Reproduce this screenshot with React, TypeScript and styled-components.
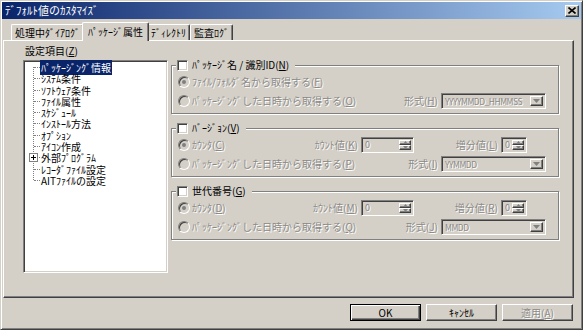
import styled, { createGlobalStyle, css } from 'styled-components';

const FACE = '#d4d0c8';
const SHADOW = '#808080';
const DARK = '#404040';
const LIGHT = '#ffffff';
const GRAY_TEXT = '#8c8a86';

const GlobalStyle = createGlobalStyle`
  html, body {
    margin: 0;
    padding: 0;
    background: #fff;
  }
  body {
    font-family: "MS UI Gothic", "Noto Sans CJK JP", sans-serif;
    font-size: 10px;
    line-height: 12px;
    color: #000;
  }
  * {
    box-sizing: border-box;
  }
`;

const raised = css`
  border: 1px solid;
  border-color: ${LIGHT} ${DARK} ${DARK} ${LIGHT};
  box-shadow: inset -1px -1px ${SHADOW};
`;

const sunken = css`
  border: 1px solid;
  border-color: ${SHADOW} ${LIGHT} ${LIGHT} ${SHADOW};
  box-shadow: inset 1px 1px ${DARK}, inset -1px -1px ${FACE};
`;

const disabledText = css`
  color: ${GRAY_TEXT};
  text-shadow: 1px 1px ${LIGHT};
`;

const Window = styled.div`
  width: 583px;
  height: 330px;
  background: ${FACE};
  border: 1px solid;
  border-color: ${FACE} ${DARK} ${DARK} ${FACE};
  box-shadow: inset 1px 1px ${LIGHT}, inset -1px -1px ${SHADOW};
  padding: 1px;
  display: flex;
  flex-direction: column;
`;

const TitleBar = styled.div`
  height: 17px;
  background: linear-gradient(to right, #0a246a, #a6caf0);
  color: #fff;
  display: flex;
  align-items: center;
  justify-content: space-between;
  padding: 0 2px 0 3px;
`;

const TitleText = styled.span`
  font-size: 11px;
  line-height: 13px;
`;

const CloseButton = styled.div`
  width: 14px;
  height: 12px;
  background: ${FACE};
  ${raised};
  display: flex;
  align-items: center;
  justify-content: center;
`;

const TabStrip = styled.div`
  height: 21px;
  display: flex;
  align-items: flex-end;
  padding-left: 9px;
  position: relative;
  z-index: 1;
`;

const Tab = styled.div<{ $active?: boolean }>`
  height: ${(p) => (p.$active ? 19 : 16)}px;
  padding: 0 ${(p) => (p.$active ? 5 : 3)}px;
  margin: 0 ${(p) => (p.$active ? -2 : 0)}px ${(p) => (p.$active ? -1 : 0)}px;
  background: ${FACE};
  border-top: 1px solid ${LIGHT};
  border-left: 1px solid ${LIGHT};
  border-right: 1px solid ${DARK};
  box-shadow: inset -1px 0 ${SHADOW};
  border-radius: 2px 2px 0 0;
  display: flex;
  align-items: center;
  position: relative;
  z-index: ${(p) => (p.$active ? 2 : 0)};
  white-space: nowrap;
`;

const Panel = styled.div`
  height: 258px;
  margin: 0 7px 0 1px;
  ${raised};
  display: flex;
  padding: 4px 0 0 19px;
`;

const LeftColumn = styled.div`
  width: 145px;
  display: flex;
  flex-direction: column;
`;

const FieldCaption = styled.div`
  height: 15px;
  padding-left: 2px;
`;

const Tree = styled.div`
  height: 213px;
  background: #fff;
  ${sunken};
  padding: 1px 0 0 2px;
`;

const TreeList = styled.div`
  position: relative;

  &::before {
    content: '';
    position: absolute;
    left: 7px;
    top: 5px;
    height: 113px;
    border-left: 1px dotted ${SHADOW};
  }
`;

const TreeItem = styled.div`
  position: relative;
  height: 11.3px;
  line-height: 11.3px;
  padding-left: 14px;
  white-space: nowrap;

  &::before {
    content: '';
    position: absolute;
    left: 8px;
    top: 5px;
    width: 6px;
    border-top: 1px dotted ${SHADOW};
  }
`;

const TreeText = styled.span<{ $selected?: boolean }>`
  padding: 0 1px;
  ${(p) =>
    p.$selected &&
    css`
      background: #0a246a;
      color: #fff;
    `}
`;

const Expander = styled.span`
  position: absolute;
  left: 3px;
  top: 1px;
  width: 9px;
  height: 9px;
  border: 1px solid ${SHADOW};
  background: #fff;
  z-index: 1;

  &::before,
  &::after {
    content: '';
    position: absolute;
    background: #000;
  }
  &::before {
    left: 1px;
    top: 3px;
    width: 5px;
    height: 1px;
  }
  &::after {
    left: 3px;
    top: 1px;
    width: 1px;
    height: 5px;
  }
`;

const RightColumn = styled.div`
  width: 388px;
  margin-left: 3px;
  padding-top: 14px;
  display: flex;
  flex-direction: column;
  gap: 8px;
`;

const Group = styled.fieldset`
  margin: 0;
  min-width: 0;
  padding: 1px 12px 3px 6px;
  border: 1px solid ${SHADOW};
  box-shadow: inset 1px 1px ${LIGHT}, 1px 1px ${LIGHT};
`;

const Legend = styled.legend`
  display: flex;
  align-items: center;
  gap: 4px;
  height: 12px;
  margin-left: -2px;
  padding: 0 6px 0 1px;
  background: ${FACE};
  position: relative;
`;

const CheckBox = styled.span`
  width: 11px;
  height: 11px;
  background: #fff;
  ${sunken};
`;

const Row = styled.div<{ $endGap?: number }>`
  height: 19px;
  display: flex;
  align-items: center;
  padding-right: ${(p) => p.$endGap ?? 0}px;
`;

const Radio = styled.label`
  flex: 1;
  display: flex;
  align-items: center;
  gap: 2px;
  white-space: nowrap;
  ${disabledText};
`;

const RadioCircle = styled.span<{ $checked?: boolean }>`
  width: 12px;
  height: 12px;
  border-radius: 50%;
  border: 1px solid;
  border-color: ${SHADOW} ${LIGHT} ${LIGHT} ${SHADOW};
  box-shadow: inset 1px 1px ${DARK};
  background: ${FACE};
  position: relative;
  flex: none;

  ${(p) =>
    p.$checked &&
    css`
      &::after {
        content: '';
        position: absolute;
        left: 3px;
        top: 3px;
        width: 4px;
        height: 4px;
        border-radius: 50%;
        background: ${SHADOW};
      }
    `}
`;

const FieldLabel = styled.span<{ $width: number }>`
  width: ${(p) => p.$width}px;
  text-align: right;
  margin-right: 3px;
  white-space: nowrap;
  ${disabledText};
`;

const SpinBox = styled.div<{ $width: number }>`
  width: ${(p) => p.$width}px;
  height: 16px;
  ${sunken};
  background: ${FACE};
  display: flex;
  padding: 2px;
`;

const SpinValue = styled.span`
  flex: 1;
  font-size: 9px;
  line-height: 10px;
  padding-left: 1px;
  ${disabledText};
`;

const SpinButtons = styled.div`
  width: 12px;
  display: flex;
  flex-direction: column;
`;

const SpinButton = styled.div`
  flex: 1;
  background: ${FACE};
  ${raised};
  display: flex;
  align-items: center;
  justify-content: center;
`;

const Combo = styled.div`
  width: 105px;
  height: 16px;
  ${sunken};
  background: ${FACE};
  display: flex;
  padding: 2px;
`;

const ComboText = styled.span`
  flex: 1;
  font-size: 8.5px;
  letter-spacing: -0.5px;
  line-height: 11px;
  padding-left: 1px;
  white-space: nowrap;
  overflow: hidden;
  ${disabledText};
`;

const DropButton = styled.div`
  width: 13px;
  flex: none;
  background: ${FACE};
  ${raised};
  display: flex;
  align-items: center;
  justify-content: center;
`;

const ButtonRow = styled.div`
  display: flex;
  justify-content: flex-end;
  gap: 5px;
  margin-top: 6px;
  padding-right: 8px;
`;

const PushButton = styled.div<{ $default?: boolean; $disabled?: boolean }>`
  width: 71px;
  height: 17px;
  background: ${FACE};
  ${raised};
  display: flex;
  align-items: center;
  justify-content: center;
  ${(p) =>
    p.$default &&
    css`
      border: 1px solid #000;
      box-shadow: inset 1px 1px ${LIGHT}, inset -1px -1px ${DARK}, inset -2px -2px ${SHADOW};
    `}
  ${(p) => p.$disabled && disabledText};
`;

const Arrow = ({ up = false }: { up?: boolean }) => (
  <svg width="5" height="3" viewBox="0 0 5 3">
    <path d={up ? 'M2.5 0 L5 3 L0 3 Z' : 'M0 0 L5 0 L2.5 3 Z'} fill={SHADOW} />
  </svg>
);

const Spin = ({ width }: { width: number }) => (
  <SpinBox $width={width}>
    <SpinValue>0</SpinValue>
    <SpinButtons>
      <SpinButton>
        <Arrow up />
      </SpinButton>
      <SpinButton>
        <Arrow />
      </SpinButton>
    </SpinButtons>
  </SpinBox>
);

const Select = ({ value }: { value: string }) => (
  <Combo>
    <ComboText>{value}</ComboText>
    <DropButton>
      <svg width="7" height="4" viewBox="0 0 7 4">
        <path d="M0 0 L7 0 L3.5 4 Z" fill={SHADOW} />
      </svg>
    </DropButton>
  </Combo>
);

const treeItems = [
  'ﾊﾟｯｹｰｼﾞﾝｸﾞ情報',
  'ｼｽﾃﾑ条件',
  'ｿﾌﾄｳｪｱ条件',
  'ﾌｧｲﾙ属性',
  'ｽｹｼﾞｭｰﾙ',
  'ｲﾝｽﾄｰﾙ方法',
  'ｵﾌﾟｼｮﾝ',
  'ｱｲｺﾝ作成',
  '外部ﾌﾟﾛｸﾞﾗﾑ',
  'ﾚｺｰﾀﾞﾌｧｲﾙ設定',
  'AITﾌｧｲﾙの設定',
];

const DATE_RADIO = 'ﾊﾟｯｹｰｼﾞﾝｸﾞした日時から取得する';

const CounterRow = ({ radioKey, countKey, stepKey }: { radioKey: string; countKey: string; stepKey: string }) => (
  <Row $endGap={19}>
    <Radio>
      <RadioCircle $checked />
      <span>
        ｶｳﾝﾀ(<u>{radioKey}</u>)
      </span>
    </Radio>
    <FieldLabel $width={52}>
      ｶｳﾝﾄ値(<u>{countKey}</u>)
    </FieldLabel>
    <Spin width={53} />
    <FieldLabel $width={84}>
      増分値(<u>{stepKey}</u>)
    </FieldLabel>
    <Spin width={26} />
  </Row>
);

const DateRow = ({ radioKey, formatKey, format }: { radioKey: string; formatKey: string; format: string }) => (
  <Row>
    <Radio>
      <RadioCircle />
      <span>
        {DATE_RADIO}(<u>{radioKey}</u>)
      </span>
    </Radio>
    <FieldLabel $width={40}>
      形式(<u>{formatKey}</u>)
    </FieldLabel>
    <Select value={format} />
  </Row>
);

const App = () => {
  return (
    <>
      <GlobalStyle />
      <Window>
        <TitleBar>
          <TitleText>ﾃﾞﾌｫﾙﾄ値のｶｽﾀﾏｲｽﾞ</TitleText>
          <CloseButton>
            <svg width="8" height="7" viewBox="0 0 8 7">
              <path d="M0.5 0.5 L7.5 6.5 M7.5 0.5 L0.5 6.5" stroke="#000" strokeWidth="1.6" />
            </svg>
          </CloseButton>
        </TitleBar>

        <TabStrip>
          <Tab>処理中ﾀﾞｲｱﾛｸﾞ</Tab>
          <Tab $active>ﾊﾟｯｹｰｼﾞ属性</Tab>
          <Tab>ﾃﾞｨﾚｸﾄﾘ</Tab>
          <Tab>監査ﾛｸﾞ</Tab>
        </TabStrip>

        <Panel>
          <LeftColumn>
            <FieldCaption>
              設定項目(<u>Z</u>)
            </FieldCaption>
            <Tree>
              <TreeList>
                {treeItems.map((item, i) => (
                  <TreeItem key={item}>
                    {item === '外部ﾌﾟﾛｸﾞﾗﾑ' && <Expander />}
                    <TreeText $selected={i === 0}>{item}</TreeText>
                  </TreeItem>
                ))}
              </TreeList>
            </Tree>
          </LeftColumn>

          <RightColumn>
            <Group>
              <Legend>
                <CheckBox />
                <span>
                  ﾊﾟｯｹｰｼﾞ名 / 識別ID(<u>N</u>)
                </span>
              </Legend>
              <Row>
                <Radio>
                  <RadioCircle $checked />
                  <span>
                    ﾌｧｲﾙ/ﾌｫﾙﾀﾞ名から取得する(<u>F</u>)
                  </span>
                </Radio>
              </Row>
              <DateRow radioKey="O" formatKey="H" format="YYYYMMDD_HHMMSS" />
            </Group>

            <Group>
              <Legend>
                <CheckBox />
                <span>
                  ﾊﾞｰｼﾞｮﾝ(<u>V</u>)
                </span>
              </Legend>
              <CounterRow radioKey="C" countKey="K" stepKey="L" />
              <DateRow radioKey="P" formatKey="I" format="YYMMDD" />
            </Group>

            <Group>
              <Legend>
                <CheckBox />
                <span>
                  世代番号(<u>G</u>)
                </span>
              </Legend>
              <CounterRow radioKey="D" countKey="M" stepKey="R" />
              <DateRow radioKey="Q" formatKey="J" format="MMDD" />
            </Group>
          </RightColumn>
        </Panel>

        <ButtonRow>
          <PushButton $default>OK</PushButton>
          <PushButton>ｷｬﾝｾﾙ</PushButton>
          <PushButton $disabled>
            適用(<u>A</u>)
          </PushButton>
        </ButtonRow>
      </Window>
    </>
  );
};

export default App;
